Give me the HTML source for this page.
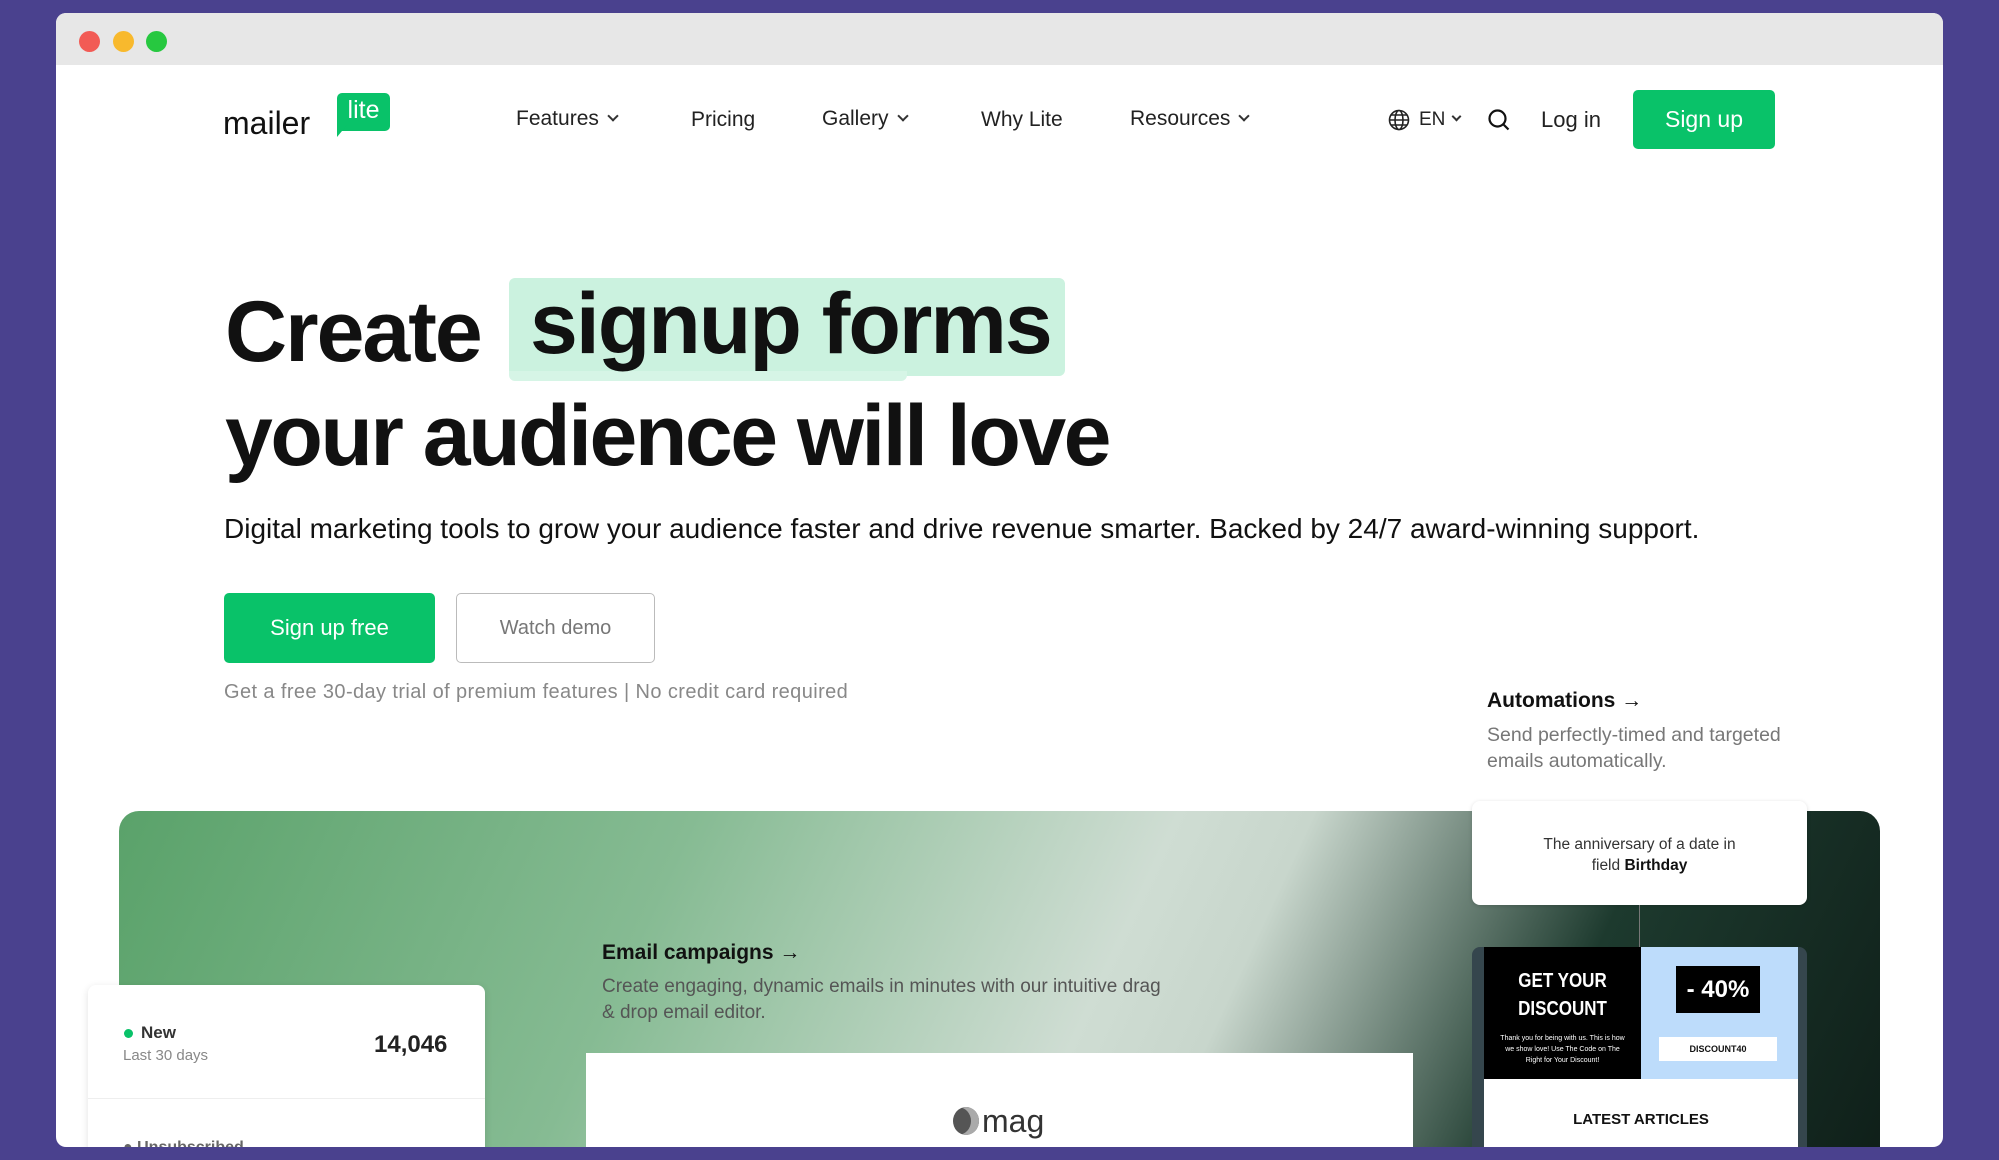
<!DOCTYPE html>
<html><head><meta charset="utf-8"><style>
*{margin:0;padding:0;box-sizing:border-box}
body{width:1999px;height:1160px;background:#4a418e;font-family:"Liberation Sans",sans-serif;position:relative;overflow:hidden;color:#111}
.win{position:absolute;left:56px;top:13px;width:1887px;height:1134px;background:#fff;border-radius:10px;overflow:hidden}
.bar{position:absolute;left:0;top:0;width:100%;height:52px;background:#e7e7e7}
.dot{position:absolute;top:18px;width:21px;height:21px;border-radius:50%}
.a{position:absolute;white-space:nowrap}
.nav{font-size:21px;color:#222;top:94px}
.chev{display:inline-block;width:8px;height:8px;border-right:2px solid #333;border-bottom:2px solid #333;transform:rotate(45deg);margin-left:10px;position:relative;top:-5px}
h1{font-size:86px;font-weight:bold;letter-spacing:-2px;position:absolute;white-space:nowrap}
.btn{position:absolute;border-radius:5px;display:flex;align-items:center;justify-content:center}
</style></head><body>
<div class="win">
<div class="bar"></div>
<div class="dot" style="left:23px;background:#f25b55"></div>
<div class="dot" style="left:57px;background:#f8b92d"></div>
<div class="dot" style="left:90px;background:#27c840"></div>

<div class="a" style="left:167px;top:92px;font-size:32px;color:#111">mailer</div>
<div class="a" style="left:281px;top:80px;width:53px;height:38px;background:#09c269;border-radius:5px;color:#fff;font-size:25px;text-align:center;line-height:34px">lite</div>
<div class="a" style="left:281px;top:112px;width:0;height:0;border-left:10px solid #09c269;border-bottom:12px solid transparent"></div>

<div class="a nav" style="left:460px">Features<span class="chev"></span></div>
<div class="a nav" style="left:635px;top:95px">Pricing</div>
<div class="a nav" style="left:766px">Gallery<span class="chev"></span></div>
<div class="a nav" style="left:925px;top:95px">Why Lite</div>
<div class="a nav" style="left:1074px">Resources<span class="chev"></span></div>
<svg class="a" style="left:1332px;top:96px" width="22" height="22" viewBox="0 0 22 22" fill="none" stroke="#222" stroke-width="1.6"><circle cx="11" cy="11" r="9.5"/><ellipse cx="11" cy="11" rx="4" ry="9.5"/><path d="M1.5 11h19M3 6h16M3 16h16"/></svg>
<div class="a nav" style="left:1363px;top:96px;font-size:19px">EN<span class="chev" style="margin-left:8px;width:7px;height:7px"></span></div>
<svg class="a" style="left:1431px;top:95px" width="24" height="24" viewBox="0 0 24 24" fill="none" stroke="#111" stroke-width="2.2"><circle cx="10.5" cy="10.5" r="8"/><path d="M16.5 16.5l5 5"/></svg>
<div class="a nav" style="left:1485px;top:94px;font-size:22px">Log in</div>
<div class="btn" style="left:1577px;top:77px;width:142px;height:59px;background:#09c269;color:#fff;font-size:23px">Sign up</div>

<div class="a" style="left:453px;top:265px;width:556px;height:98px;background:#cbf2df;border-radius:6px"></div>
<div class="a" style="left:453px;top:358px;width:398px;height:10px;background:#d6f5e6;border-radius:0 0 6px 6px"></div>
<h1 style="left:169px;top:270px">Create</h1>
<h1 style="left:474px;top:262px">signup forms</h1>
<h1 style="left:169px;top:374px;letter-spacing:-2.5px">your audience will love</h1>

<div class="a" style="left:168px;top:500px;font-size:28px;color:#111">Digital marketing tools to grow your audience faster and drive revenue smarter. Backed by 24/7 award-winning support.</div>
<div class="btn" style="left:168px;top:580px;width:211px;height:70px;background:#09c269;color:#fff;font-size:22px">Sign up free</div>
<div class="btn" style="left:400px;top:580px;width:199px;height:70px;border:1.5px solid #bbb;color:#777;font-size:20px">Watch demo</div>
<div class="a" style="left:168px;top:668px;font-size:20px;letter-spacing:0.4px;color:#888">Get a free 30-day trial of premium features | No credit card required</div>

<div class="a" style="left:1431px;top:676px;font-size:21px;font-weight:bold;color:#111">Automations →</div>
<div class="a" style="left:1431px;top:709px;font-size:19.5px;color:#777;line-height:26px">Send perfectly-timed and targeted<br>emails automatically.</div>

<div class="a" style="left:63px;top:798px;width:1761px;height:360px;border-radius:20px;background:linear-gradient(115deg,#5aa26a 0%,#86bb93 30%,#cfddd3 55%,#c8d6cc 62%,#1d3a2e 80%,#0f1f19 100%)"></div>

<div class="a" style="left:546px;top:928px;font-size:21px;font-weight:bold;color:#111">Email campaigns →</div>
<div class="a" style="left:546px;top:961px;font-size:19px;color:#555;line-height:26px">Create engaging, dynamic emails in minutes with our intuitive drag<br>&amp; drop email editor.</div>
<div class="a" style="left:530px;top:1040px;width:827px;height:120px;background:#fff"></div>
<div class="a" style="left:897px;top:1090px;font-size:32px;color:#333"><span style="display:inline-block;width:26px;height:28px;border-radius:50%;background:#555;vertical-align:-3px;margin-right:3px;box-shadow:inset -8px 0 0 #aaa"></span>mag</div>

<div class="a" style="left:32px;top:972px;width:397px;height:200px;background:#fff;border-radius:8px;box-shadow:0 2px 8px rgba(0,0,0,.12)"></div>
<div class="a" style="left:68px;top:1016px;width:9px;height:9px;border-radius:50%;background:#09c269"></div>
<div class="a" style="left:85px;top:1010px;font-size:17px;font-weight:bold;color:#333">New</div>
<div class="a" style="left:67px;top:1034px;font-size:15px;color:#888">Last 30 days</div>
<div class="a" style="left:318px;top:1018px;font-size:24px;font-weight:bold;color:#222">14,046</div>
<div class="a" style="left:32px;top:1085px;width:397px;height:1px;background:#eee"></div>
<div class="a" style="left:67px;top:1126px;font-size:16px;font-weight:bold;color:#666">● Unsubscribed</div>

<div class="a" style="left:1416px;top:788px;width:335px;height:104px;background:#fff;border-radius:8px;box-shadow:0 1px 4px rgba(0,0,0,.15);text-align:center;font-size:15.5px;color:#333;padding-top:33px;line-height:21px">The anniversary of a date in<br>field <b style="color:#111">Birthday</b></div>
<div class="a" style="left:1583px;top:892px;width:1px;height:42px;background:#777"></div>
<div class="a" style="left:1416px;top:934px;width:335px;height:220px;background:#35464d;border-radius:8px"></div>
<div class="a" style="left:1428px;top:934px;width:157px;height:132px;background:#000;color:#fff;text-align:center">
<div style="font-size:20px;font-weight:bold;line-height:28px;margin-top:20px;transform:scaleX(.85)">GET YOUR<br>DISCOUNT</div>
<div style="font-size:7px;line-height:11px;margin-top:10px">Thank you for being with us. This is how<br>we show love! Use The Code on The<br>Right for Your Discount!</div></div>
<div class="a" style="left:1585px;top:934px;width:157px;height:132px;background:#bddcfb"></div>
<div class="a" style="left:1620px;top:953px;width:84px;height:47px;background:#000;color:#fff;font-size:24px;font-weight:bold;text-align:center;line-height:47px">- 40%</div>
<div class="a" style="left:1603px;top:1024px;width:118px;height:24px;background:#fff;font-size:9px;font-weight:bold;text-align:center;line-height:24px">DISCOUNT40</div>
<div class="a" style="left:1428px;top:1066px;width:314px;height:90px;background:#fff;text-align:center;font-size:15px;font-weight:bold;padding-top:32px">LATEST ARTICLES</div>
</div>
</body></html>
